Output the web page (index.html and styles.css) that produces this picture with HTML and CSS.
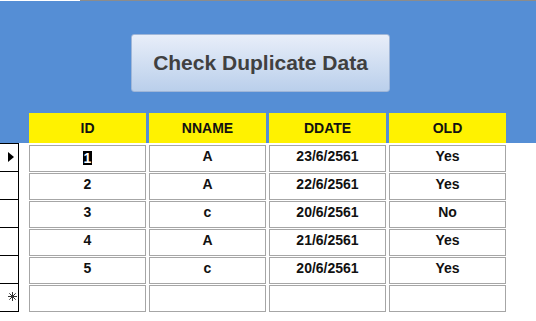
FILE: index.html
```html
<!DOCTYPE html>
<html lang="en">
<head>
    <meta charset="UTF-8">
    <meta name="viewport" content="width=device-width, initial-scale=1.0">
    <title>Check Duplicate Data</title>
    <link rel="stylesheet" href="styles.css">
</head>
<body>
    <div class="top-strip"><div class="tab"></div></div>

    <div class="form-header">
        <button class="check-btn">Check Duplicate Data</button>
        <div class="head-row">
            <div class="head-cell">ID</div>
            <div class="head-cell">NNAME</div>
            <div class="head-cell">DDATE</div>
            <div class="head-cell">OLD</div>
        </div>
    </div>

    <div class="sheet">
        <div class="selectors">
            <div class="sel">
                <svg width="6" height="10" viewBox="0 0 6 10"><polygon points="0,0 6,5 0,10" fill="#000"/></svg>
            </div>
            <div class="sel"></div>
            <div class="sel"></div>
            <div class="sel"></div>
            <div class="sel"></div>
            <div class="sel">
                <svg width="9" height="9" viewBox="0 0 9 9" stroke="#333" stroke-width="1">
                    <line x1="4.5" y1="0" x2="4.5" y2="9"/>
                    <line x1="0" y1="4.5" x2="9" y2="4.5"/>
                    <line x1="1.3" y1="1.3" x2="7.7" y2="7.7"/>
                    <line x1="7.7" y1="1.3" x2="1.3" y2="7.7"/>
                </svg>
            </div>
        </div>

        <div class="grid">
            <div class="cell"><span class="selected">1</span></div>
            <div class="cell">A</div>
            <div class="cell">23/6/2561</div>
            <div class="cell">Yes</div>

            <div class="cell">2</div>
            <div class="cell">A</div>
            <div class="cell">22/6/2561</div>
            <div class="cell">Yes</div>

            <div class="cell">3</div>
            <div class="cell">c</div>
            <div class="cell">20/6/2561</div>
            <div class="cell">No</div>

            <div class="cell">4</div>
            <div class="cell">A</div>
            <div class="cell">21/6/2561</div>
            <div class="cell">Yes</div>

            <div class="cell">5</div>
            <div class="cell">c</div>
            <div class="cell">20/6/2561</div>
            <div class="cell">Yes</div>

            <div class="cell"></div>
            <div class="cell"></div>
            <div class="cell"></div>
            <div class="cell"></div>
        </div>
    </div>
</body>
</html>
```

FILE: styles.css
```css
body {
    margin: 0;
    background: #ffffff;
    font-family: "Liberation Sans", Arial, sans-serif;
}

.top-strip {
    height: 1px;
    background: #8c8c8c;
}

.tab {
    width: 80px;
    height: 1px;
    background: #ffffff;
}

.form-header {
    background: #558ed5;
    height: 142px;
    box-sizing: border-box;
    padding-top: 33px;
}

.check-btn {
    display: block;
    margin-left: 131px;
    width: 259px;
    height: 58px;
    border: 1px solid #9fb6d8;
    border-radius: 3px;
    background: linear-gradient(#e8eef9, #bacfeb);
    color: #404040;
    font-family: "Liberation Sans", Arial, sans-serif;
    font-size: 21px;
    font-weight: bold;
    padding: 0;
}

.head-row {
    display: flex;
    gap: 3px;
    margin-top: 21px;
    margin-left: 29px;
}

.head-cell {
    width: 117px;
    height: 30px;
    background: #fff200;
    color: #111;
    font-size: 14px;
    font-weight: bold;
    display: flex;
    align-items: center;
    justify-content: center;
    padding-bottom: 1px;
    box-sizing: border-box;
}

.sheet {
    display: flex;
}

.selectors {
    width: 18px;
    border-top: 1px solid #000;
    border-right: 1px solid #000;
}

.sel {
    height: 28px;
    border-bottom: 1px solid #000;
    display: flex;
    align-items: center;
    padding-left: 8px;
    padding-bottom: 2px;
    box-sizing: border-box;
}

.grid {
    display: grid;
    grid-template-columns: repeat(4, 117px);
    grid-auto-rows: 27px;
    column-gap: 3px;
    row-gap: 1px;
    margin-top: 2px;
    margin-left: 10px;
}

.cell {
    border: 1px solid #a6a6a6;
    box-sizing: border-box;
    font-size: 14px;
    font-weight: bold;
    color: #111;
    display: flex;
    justify-content: center;
    padding-top: 2px;
}

.selected {
    background: #000;
    color: #fff;
    height: 14px;
    line-height: 15px;
    padding: 0 1px;
    margin-top: 3px;
}
```
